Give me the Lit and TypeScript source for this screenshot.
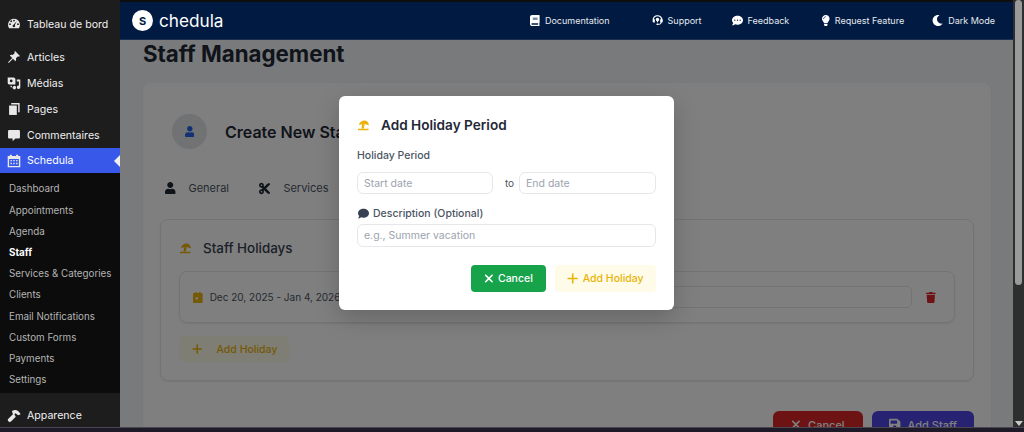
import { LitElement, html, css, svg } from "lit";
import { customElement } from "lit/decorators.js";

const fa = (w: number, d: string, h = 512) =>
  html`<svg class="ic" viewBox="0 0 ${w} ${h}" fill="currentColor" aria-hidden="true">${svg`<path d=${d}></path>`}</svg>`;

const USER = fa(448, "M224 256c70.7 0 128-57.3 128-128S294.7 0 224 0 96 57.3 96 128s57.3 128 128 128zm89.6 32h-16.7c-22.2 10.2-46.9 16-72.9 16s-50.6-5.8-72.9-16h-16.7C60.2 288 0 348.2 0 422.4V464c0 26.5 21.5 48 48 48h352c26.5 0 48-21.5 48-48v-41.6c0-74.2-60.2-134.4-134.4-134.4z");
const TIMES = fa(384, "M342.6 150.6c12.5-12.5 12.5-32.8 0-45.3s-32.8-12.5-45.3 0L192 210.7 86.6 105.4c-12.5-12.5-32.8-12.5-45.3 0s-12.5 32.8 0 45.3L146.7 256 41.4 361.4c-12.5 12.5-12.5 32.8 0 45.3s32.8 12.5 45.3 0L192 301.3 297.4 406.6c12.5 12.5 32.8 12.5 45.3 0s12.5-32.8 0-45.3L237.3 256 342.6 150.6z");
const PLUS = fa(448, "M256 80c0-17.7-14.3-32-32-32s-32 14.3-32 32V224H48c-17.7 0-32 14.3-32 32s14.3 32 32 32H192V432c0 17.7 14.3 32 32 32s32-14.3 32-32V288H400c17.7 0 32-14.3 32-32s-14.3-32-32-32H256V80z");
const TRASH = fa(448, "M432 32H312l-9.4-18.7A24 24 0 0 0 281.1 0H166.8a23.72 23.72 0 0 0-21.4 13.3L136 32H16A16 16 0 0 0 0 48v32a16 16 0 0 0 16 16h416a16 16 0 0 0 16-16V48a16 16 0 0 0-16-16zM53.2 467a48 48 0 0 0 47.9 45h245.8a48 48 0 0 0 47.9-45L416 128H32z");
const COMMENT = fa(512, "M256 32C114.6 32 0 125.1 0 240c0 49.6 21.4 95 57 130.7C44.5 421.1 2.7 466 2.2 466.5c-2.2 2.3-2.8 5.7-1.5 8.7S4.8 480 8 480c66.3 0 116-31.8 140.6-51.4 32.7 12.3 69 19.4 107.4 19.4 141.4 0 256-93.1 256-208S397.4 32 256 32z");
const COMMENT_DOTS = fa(512, "M256 32C114.6 32 0 125.1 0 240c0 49.6 21.4 95 57 130.7C44.5 421.1 2.7 466 2.2 466.5c-2.2 2.3-2.8 5.7-1.5 8.7S4.8 480 8 480c66.3 0 116-31.8 140.6-51.4 32.7 12.3 69 19.4 107.4 19.4 141.4 0 256-93.1 256-208S397.4 32 256 32zM128 272c-17.7 0-32-14.3-32-32s14.3-32 32-32 32 14.3 32 32-14.3 32-32 32zm128 0c-17.7 0-32-14.3-32-32s14.3-32 32-32 32 14.3 32 32-14.3 32-32 32zm128 0c-17.7 0-32-14.3-32-32s14.3-32 32-32 32 14.3 32 32-14.3 32-32 32z");
const MOON = fa(512, "M283.211 512c78.962 0 151.079-35.925 198.857-94.792 7.068-8.708-.639-21.43-11.562-19.35-124.203 23.654-238.262-71.576-238.262-196.954 0-72.222 38.662-138.635 101.498-174.394 9.686-5.512 7.25-20.197-3.756-22.23A258.156 258.156 0 0 0 283.211 0c-141.309 0-256 114.511-256 256 0 141.309 114.511 256 256 256z");
const BULB = fa(352, "M96.06 454.35c.01 6.29 1.87 12.45 5.36 17.69l17.09 25.69a31.99 31.99 0 0 0 26.64 14.28h61.71a31.99 31.99 0 0 0 26.64-14.28l17.09-25.69a31.989 31.989 0 0 0 5.36-17.69l.04-38.35H96.01l.05 38.35zM0 176c0 44.37 16.45 84.85 43.56 115.78 16.52 18.85 42.36 58.23 52.21 91.45.04.26.07.52.11.78h160.24c.04-.26.07-.51.11-.78 9.85-33.22 35.69-72.6 52.21-91.45C335.55 260.85 352 220.37 352 176 352 78.61 272.91-.3 175.45 0 73.44.31 0 82.97 0 176zm176-80c-44.11 0-80 35.89-80 80 0 8.84-7.16 16-16 16s-16-7.16-16-16c0-61.76 50.24-112 112-112 8.84 0 16 7.16 16 16s-7.16 16-16 16z");
const BOOK = fa(448, "M448 360V24c0-13.3-10.7-24-24-24H96C43 0 0 43 0 96v320c0 53 43 96 96 96h328c13.3 0 24-10.7 24-24v-16c0-7.5-3.5-14.3-8.9-18.7-4.2-15.4-4.2-59.3 0-74.7 5.4-4.3 8.9-11.1 8.9-18.6zM128 134c0-3.3 2.7-6 6-6h212c3.3 0 6 2.7 6 6v20c0 3.3-2.7 6-6 6H134c-3.3 0-6-2.7-6-6v-20zm0 64c0-3.3 2.7-6 6-6h212c3.3 0 6 2.7 6 6v20c0 3.3-2.7 6-6 6H134c-3.3 0-6-2.7-6-6v-20zm253.4 250H96c-17.7 0-32-14.3-32-32 0-17.6 14.4-32 32-32h285.4c-1.9 17.1-1.9 46.9 0 64z");
const CUT = fa(448, "M278.06 256L444.48 89.57c4.69-4.69 4.69-12.29 0-16.97-32.8-32.8-85.99-32.8-118.79 0L210.18 188.12l-24.86-24.86c4.31-10.92 6.68-22.81 6.68-35.26 0-53.02-42.98-96-96-96S0 74.98 0 128s42.98 96 96 96c4.54 0 8.99-.32 13.36-.93L142.29 256l-32.93 32.93c-4.37-.61-8.83-.93-13.36-.93-53.02 0-96 42.98-96 96s42.98 96 96 96 96-42.98 96-96c0-12.45-2.37-24.34-6.68-35.26l24.86-24.86L325.69 439.4c32.8 32.8 85.99 32.8 118.79 0 4.69-4.68 4.69-12.28 0-16.97L278.06 256zM96 160c-17.64 0-32-14.36-32-32s14.36-32 32-32 32 14.36 32 32-14.36 32-32 32zm0 256c-17.64 0-32-14.36-32-32s14.36-32 32-32 32 14.36 32 32-14.36 32-32 32z");
const SAVE = fa(448, "M433.941 129.941l-83.882-83.882A48 48 0 0 0 316.118 32H48C21.49 32 0 53.49 0 80v352c0 26.51 21.49 48 48 48h352c26.51 0 48-21.49 48-48V163.882a48 48 0 0 0-14.059-33.941zM224 416c-35.346 0-64-28.654-64-64 0-35.346 28.654-64 64-64s64 28.654 64 64c0 35.346-28.654 64-64 64zm96-304.52V212c0 6.627-5.373 12-12 12H76c-6.627 0-12-5.373-12-12V108c0-6.627 5.373-12 12-12h228.52c3.183 0 6.235 1.264 8.485 3.515l3.48 3.48A11.996 11.996 0 0 1 320 111.48z");
const BEACH = fa(512, "M40 225C70 85 200 10 320 20 430 30 505 120 505 255 400 195 250 180 40 225ZM190 200 312 205 265 395H165ZM0 410H490V480H0Z");
const CAL = fa(448, "M96 0h64v48h128V0h64v48h48a48 48 0 0 1 48 48v368a48 48 0 0 1-48 48H48a48 48 0 0 1-48-48V96a48 48 0 0 1 48-48h48zM120 240v104h104V240z");
const HEADSET = fa(512, "M256 10C125 10 30 105 30 230v70c0 30 22 52 52 52h50V200h-42C100 120 170 62 256 62s156 58 166 138h-42v152h24c-8 36-40 60-80 60h-36c-8-14-24-22-40-22-26 0-46 18-46 40s20 40 46 40c16 0 32-8 40-20h36c66 0 122-44 132-100 28-4 46-26 46-52v-70C482 105 387 10 256 10zM256 130c-46 0-80 36-80 82 0 38 22 68 54 80v50h52v-50c32-12 54-42 54-80 0-46-34-82-80-82z");
const GAUGE = html`<svg class="ic" viewBox="0 0 20 20" fill="currentColor" aria-hidden="true"><path fill-rule="evenodd" d="M10 2.500a8.500 8.500 0 0 0-7.400 12.700c.3.500.8.800 1.400.800h12c.6 0 1.100-.3 1.400-.8A8.500 8.500 0 0 0 10 2.500zM6 4.800a1.300 1.300 0 1 1 0 2.600 1.300 1.300 0 0 1 0-2.600zm4-1a1.300 1.300 0 1 1 0 2.600 1.300 1.300 0 0 1 0-2.600zM4.300 9a1.300 1.300 0 1 1 0 2.600 1.300 1.300 0 0 1 0-2.600zm11.400 0a1.300 1.300 0 1 1 0 2.600 1.300 1.300 0 0 1 0-2.600zM14 5.800 11.200 11.500a1.800 1.800 0 1 1-1.900-.6z"/></svg>`;
const PIN = html`<svg class="ic" viewBox="0 0 20 20" fill="currentColor" aria-hidden="true"><path d="M11.500 1.500 18.500 8.500 17 9.500 15.800 8.800 12.800 11.800C13.300 13.500 13 15 12 16L8.500 12.500 2.500 18.500 1.500 17.500 7.500 11.500 4 8C5 7 6.500 6.700 8.200 7.200L11.200 4.200 10.500 3z"/></svg>`;
const MEDIA = html`<svg class="ic" viewBox="0 0 20 20" fill="currentColor" aria-hidden="true"><path fill-rule="evenodd" d="M1 2h9l2 2v8H3a2 2 0 0 1-2-2zM6 5a2 2 0 1 0 0 4 2 2 0 0 0 0-4zM14 5h5v11a2.500 2.500 0 1 1-2-2.400V8h-3zM5 14h2v2H5zM9 14.500a2.500 2.500 0 1 1 0 4 2.500 2.500 0 0 1 0-4z"/></svg>`;
const PAGES = html`<svg class="ic" viewBox="0 0 20 20" fill="currentColor" aria-hidden="true"><path d="M6 1.500h12v13h-2V3.500H6z"/><path d="M3 5h11v13.500H3z"/></svg>`;
const WPCOMMENT = html`<svg class="ic" viewBox="0 0 20 20" fill="currentColor" aria-hidden="true"><path d="M3 3h14a1.500 1.500 0 0 1 1.500 1.500v9A1.500 1.500 0 0 1 17 15h-5l-4 4v-4H3a1.500 1.500 0 0 1-1.500-1.500v-9A1.500 1.500 0 0 1 3 3z"/></svg>`;
const WPCAL = html`<svg class="ic" viewBox="0 0 20 20" fill="currentColor" aria-hidden="true"><path fill-rule="evenodd" d="M4 1h3v2h6V1h3v2h3v16H1V3h3zM3 7v10h14V7zM5 8.500h2v2H5zM9 8.500h2v2H9zM13 8.500h2v2h-2zM5 12.500h2v2H5zM9 12.500h2v2H9zM13 12.500h2v2h-2z"/></svg>`;
const HAMMER = html`<svg class="ic" viewBox="0 0 20 20" fill="currentColor" aria-hidden="true"><path d="M7 3 11 1.500C14 1 17 3 18.500 6L19.500 7.500 16 9 12 6 10.500 7.500 12.500 11 6.500 17 4 19 1.500 17 1 15 3 13 8.500 7.500z"/></svg>`;

const MENU_TOP = [
  { icon: PIN, label: "Articles" },
  { icon: MEDIA, label: "Médias" },
  { icon: PAGES, label: "Pages" },
  { icon: WPCOMMENT, label: "Commentaires" },
];
const SUB = ["Dashboard", "Appointments", "Agenda", "Staff", "Services & Categories", "Clients", "Email Notifications", "Custom Forms", "Payments", "Settings"];
const NAV = [
  { icon: BOOK, label: "Documentation" },
  { icon: HEADSET, label: "Support" },
  { icon: COMMENT_DOTS, label: "Feedback" },
  { icon: BULB, label: "Request Feature" },
  { icon: MOON, label: "Dark Mode" },
];

@customElement("app-root")
export class AppRoot extends LitElement {
  static styles = css`
    :host {
      display: block;
      position: relative;
      width: 1024px;
      height: 432px;
      overflow: hidden;
      background: #1e1a28;
      font-family: Inter, "Liberation Sans", sans-serif;
    }
    * { box-sizing: border-box; }
    .ic { display: block; height: 1em; width: auto; flex: none; }

    .desktop { display: flex; height: 427px; background: #1d1d1d; }
    .taskbar { height: 5px; background: #1e1a28; border-top: 1px solid #4a4650; }

    .side {
      position: relative; z-index: 2;
      width: 120px; flex: none; background: #1d1d1d;
      display: flex; flex-direction: column; overflow: hidden;
      color: #f0f0f1; font-size: 10.6px;
    }
    .mi { display: flex; align-items: center; height: 26px; padding-left: 7px; gap: 6px; flex: none; }
    .mi .ic { font-size: 14px; width: 14px; color: #e8e8e8; }
    .mi.dash { margin-top: 11px; margin-bottom: 7px; }
    .mi.active { background: #3858e9; color: #fff; position: relative; height: 25px; }
    .mi.active::after {
      content: ""; position: absolute; right: 0; top: 7px;
      border: 6px solid transparent; border-right-color: #f0f0f1; border-left-width: 0;
    }
    .sub { background: #0c0c0c; padding: 5.4px 0 3px; display: flex; flex-direction: column; flex: none; }
    .sub div { height: 21.2px; line-height: 21.2px; padding-left: 9px; font-size: 9.8px; color: #b4b4b4; white-space: nowrap; }
    .sub .on { color: #fff; font-weight: 700; }
    .mi.app { margin-top: 9.6px; }

    .main { flex: 1; min-width: 0; display: flex; flex-direction: column; padding-top: 2px; overflow: hidden; }
    .head {
      position: relative; z-index: 2;
      height: 38px; flex: none; background: #001a42; border-bottom: 1px solid #1d2f4e;
      display: flex; align-items: center; padding-left: 12px; color: #fff;
    }
    .logo { display: flex; align-items: center; gap: 6px; font-size: 17.2px; }
    .logo .s {
      width: 21px; height: 21px; border-radius: 50%; background: #fff; color: #001a42;
      display: grid; place-items: center; font-size: 11px; font-weight: 700;
    }
    .nav { margin-left: auto; display: flex; align-items: center; font-size: 9px; color: #e6e9ee; padding-right: 18px; }
    .nav span.n { display: flex; align-items: center; gap: 5px; }
    .nav .ic { font-size: 11px; color: #fff; }
    .nav .n:nth-child(2) { margin-left: 42px; }
    .nav .n:nth-child(3) { margin-left: 30px; }
    .nav .n:nth-child(4) { margin-left: 33px; }
    .nav .n:nth-child(5) { margin-left: 28px; }

    .content { flex: 1; min-height: 0; overflow: hidden; background: #f3f4f6; padding: 1px 22px 0 23px; }
    .content h1 { margin: 0 0 17px; font-size: 22.3px; line-height: 25px; font-weight: 700; color: #1f2937; }
    .card { background: #fff; border-radius: 8px; padding: 0 17px 20px; height: 400px; box-shadow: 0 1px 2px rgba(0,0,0,.06); }
    .cardhead { display: flex; align-items: center; gap: 18px; padding: 31px 0 0 12px; }
    .avatar { width: 35px; height: 35px; border-radius: 50%; background: #e2e4e9; color: #2563eb; display: grid; place-items: center; font-size: 11px; }
    .cardhead h2 { margin: 0; font-size: 16px; font-weight: 600; color: #1f2937; white-space: nowrap; }
    .tabs { display: flex; padding: 31px 0 0 5px; font-size: 11px; color: #4b5563; height: 70px; }
    .tab { display: flex; align-items: center; gap: 13px; height: 16px; }
    .tab .ic { font-size: 12px; color: #1f2937; }
    .tab + .tab .ic { font-size: 13px; }
    .tab + .tab { margin-left: 30px; }

    .section { border: 1px solid #e5e7eb; border-radius: 8px; height: 162px; padding: 18px 18px 0; box-shadow: 0 1px 2px rgba(0,0,0,.08); }
    .section h3 { margin: 0 0 13px; display: flex; align-items: center; gap: 12px; padding-left: 1px; font-size: 13.4px; line-height: 20px; font-weight: 500; color: #374151; }
    .section h3 .ic { font-size: 11px; color: #eab308; }
    .row { display: flex; align-items: center; height: 52px; border: 1px solid #e5e7eb; border-radius: 8px; padding: 0 18px 0 13px; box-shadow: 0 1px 2px rgba(0,0,0,.08); }
    .date { display: flex; align-items: center; gap: 7px; font-size: 10px; color: #4b5563; white-space: nowrap; width: 160px; flex: none; }
    .date .ic { font-size: 11px; color: #eab308; }
    .rowinput { flex: 1; height: 22px; border: 1px solid #e5e7eb; border-radius: 5px; margin-left: 8px; }
    .trash { margin-left: 14px; font-size: 11px; color: #dc2626; }
    .ghost { margin-top: 13px; width: 110px; height: 26px; border-radius: 5px; background: #fefce8; color: #eab308; display: flex; align-items: center; gap: 14px; padding-left: 13px; font-size: 10.5px; font-weight: 500; }
    .ghost .ic { font-size: 12px; }

    .foot { display: flex; justify-content: flex-end; gap: 9px; margin-top: 30px; }
    .fbtn { height: 27px; border-radius: 6px; color: #fff; display: flex; align-items: center; justify-content: center; gap: 7px; font-size: 11px; font-weight: 500; }
    .fbtn .ic { font-size: 13px; }
    .fbtn.red { width: 90px; background: #dc2626; }
    .fbtn.blue { width: 102px; background: #4f46e5; }

    .bar { width: 11px; flex: none; background: #2e2e2e; position: relative; z-index: 2; padding: 0 2px; }
    .thumb { width: 7px; height: 285px; background: #9a9a9a; border-radius: 4px; }
    .arrow { position: absolute; left: 2px; bottom: 1px; border: 4px solid transparent; border-top: 5px solid #c8c8c8; border-bottom: 0; }

    .overlay {
      position: absolute; z-index: 1; left: 0; top: 0; right: 11px; height: 427px;
      background: rgba(0,0,0,.5);
      display: flex; justify-content: center; align-items: flex-start; padding-top: 96px;
    }
    .modal { width: 335px; height: 214px; background: #fff; border-radius: 6px; padding: 19px 18px 0; box-shadow: 0 8px 24px rgba(0,0,0,.2); }
    .modal h3 { margin: 0 0 14px; display: flex; align-items: center; gap: 12px; padding-left: 1px; font-size: 13.6px; line-height: 20px; font-weight: 600; color: #1f2937; }
    .modal h3 .ic { font-size: 11px; color: #eab308; }
    .label { font-size: 10.5px; line-height: 13px; font-weight: 500; color: #4b5563; display: flex; align-items: center; gap: 4px; }
    .label .ic { font-size: 11px; color: #374151; margin-left: 1px; }
    .dates { display: flex; align-items: center; margin: 10px 0 13px; }
    .field { height: 23px; border: 1px solid #e5e7eb; border-radius: 6px; padding-left: 6px; display: flex; align-items: center; font-size: 10.5px; color: #9ca3af; }
    .dates .field { width: 136px; height: 22px; }
    .dates .field:last-child { width: 137px; }
    .to { width: 26px; padding-left: 7px; text-align: center; font-size: 10px; color: #4b5563; }
    .modal .desc { margin-top: 4px; }
    .actions { display: flex; justify-content: flex-end; gap: 9px; margin-top: 18px; }
    .btn { height: 27px; border-radius: 4px; display: flex; align-items: center; justify-content: center; gap: 4px; font-size: 10.5px; font-weight: 500; }
    .btn .ic { font-size: 13px; }
    .btn.green { width: 75px; background: #16a34a; color: #fff; }
    .btn.yellow { width: 101px; background: #fefce8; color: #eab308; }
  `;

  render() {
    return html`
      <div class="desktop">
        <aside class="side">
          <div class="mi dash">${GAUGE}<span>Tableau de bord</span></div>
          ${MENU_TOP.map((m) => html`<div class="mi">${m.icon}<span>${m.label}</span></div>`)}
          <div class="mi active">${WPCAL}<span>Schedula</span></div>
          <div class="sub">${SUB.map((s) => html`<div class=${s === "Staff" ? "on" : ""}>${s}</div>`)}</div>
          <div class="mi app">${HAMMER}<span>Apparence</span></div>
        </aside>
        <div class="main">
          <header class="head">
            <div class="logo"><span class="s">S</span><span>chedula</span></div>
            <nav class="nav">
              ${NAV.map((n) => html`<span class="n">${n.icon}<span>${n.label}</span></span>`)}
            </nav>
          </header>
          <div class="content">
            <h1>Staff Management</h1>
            <div class="card">
              <div class="cardhead"><div class="avatar">${USER}</div><h2>Create New Staff</h2></div>
              <div class="tabs">
                <div class="tab">${USER}<span>General</span></div>
                <div class="tab">${CUT}<span>Services</span></div>
              </div>
              <div class="section">
                <h3>${BEACH}<span>Staff Holidays</span></h3>
                <div class="row">
                  <div class="date">${CAL}<span>Dec 20, 2025 - Jan 4, 2026</span></div>
                  <div class="rowinput"></div>
                  <div class="trash">${TRASH}</div>
                </div>
                <div class="ghost">${PLUS}<span>Add Holiday</span></div>
              </div>
              <div class="foot">
                <div class="fbtn red">${TIMES}<span>Cancel</span></div>
                <div class="fbtn blue">${SAVE}<span>Add Staff</span></div>
              </div>
            </div>
          </div>
        </div>
        <div class="bar"><div class="thumb"></div><div class="arrow"></div></div>
      </div>
      <div class="taskbar"></div>
      <div class="overlay">
        <div class="modal">
          <h3>${BEACH}<span>Add Holiday Period</span></h3>
          <div class="label">Holiday Period</div>
          <div class="dates">
            <div class="field">Start date</div>
            <div class="to">to</div>
            <div class="field">End date</div>
          </div>
          <div class="label">${COMMENT}<span>Description (Optional)</span></div>
          <div class="field desc">e.g., Summer vacation</div>
          <div class="actions">
            <div class="btn green">${TIMES}<span>Cancel</span></div>
            <div class="btn yellow">${PLUS}<span>Add Holiday</span></div>
          </div>
        </div>
      </div>
    `;
  }
}
